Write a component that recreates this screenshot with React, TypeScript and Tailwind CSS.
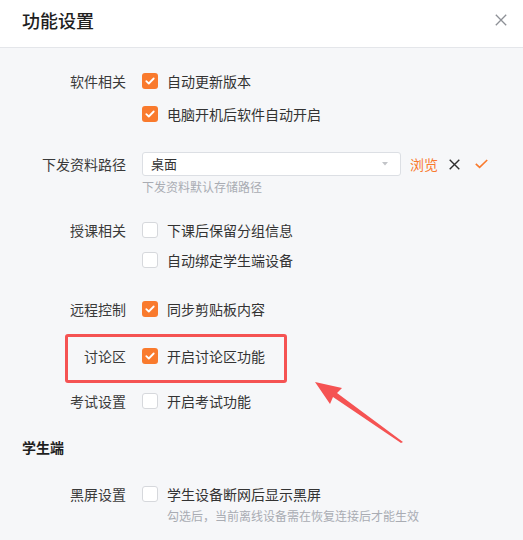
import React from "react";

const font = { fontFamily: '"Noto Sans CJK SC", "Noto Sans", sans-serif' };

function Box({ checked }: { checked: boolean }) {
  return checked ? (
    <span className="flex h-4 w-4 items-center justify-center rounded-[3px] bg-[#f97a2d]">
      <svg width="10" height="8" viewBox="0 0 10 8" fill="none">
        <path d="M1.3 4.1 L3.8 6.5 L8.7 1.5" stroke="white" strokeWidth="1.8" strokeLinecap="round" strokeLinejoin="round" />
      </svg>
    </span>
  ) : (
    <span className="h-4 w-4 rounded-[3px] border border-[#d6d8dc] bg-white" />
  );
}

function Row({ label, text, checked, className = "" }: { label?: string; text: string; checked: boolean; className?: string }) {
  return (
    <div className={"flex h-6 items-center " + className}>
      <div className="w-[126px] text-right text-[14px] text-[#3a3a3a]">{label}</div>
      <div className="ml-4 flex items-center">
        <Box checked={checked} />
        <span className="ml-[9px] text-[14px] text-[#333]">{text}</span>
      </div>
    </div>
  );
}

export default function App() {
  return (
    <div className="relative h-[540px] w-[523px] overflow-hidden bg-[#f6f7f9]" style={font}>
      <div className="flex h-12 items-start justify-between border-b border-[#e4e6ea] bg-white pl-[22px] pr-[16px]">
        <div className="mt-[7px] text-[18px] font-medium leading-[26px] text-[#1f1f1f]">功能设置</div>
        <svg className="mt-[14px]" width="12" height="12" viewBox="0 0 12 12">
          <path d="M0.8 0.8 L11.2 11.2 M11.2 0.8 L0.8 11.2" stroke="#8d9096" strokeWidth="1.3" />
        </svg>
      </div>

      <div className="flex flex-col">
        <Row label="软件相关" text="自动更新版本" checked className="mt-[21px]" />
        <Row text="电脑开机后软件自动开启" checked className="mt-[9px]" />

        <div className="mt-[26px] flex h-6 items-center">
          <div className="w-[126px] text-right text-[14px] text-[#3a3a3a]">下发资料路径</div>
          <div className="ml-4 flex h-6 w-[259px] items-center justify-between rounded-[3px] border border-[#dcdfe4] bg-white pl-2 pr-3">
            <span className="text-[13px] text-[#333]">桌面</span>
            <svg width="6" height="4" viewBox="0 0 6 4"><path d="M0 0 L6 0 L3 3.5 Z" fill="#c2c4c8" /></svg>
          </div>
          <span className="ml-[9px] text-[14px] text-[#f97a2d]">浏览</span>
          <svg className="ml-[11px]" width="11" height="11" viewBox="0 0 11 11">
            <path d="M0.7 0.7 L10.3 10.3 M10.3 0.7 L0.7 10.3" stroke="#2e2e2e" strokeWidth="1.4" />
          </svg>
          <svg className="ml-[15px]" width="13" height="10" viewBox="0 0 13 10" fill="none">
            <path d="M0.8 4.8 L4.6 8.4 L12.2 1" stroke="#f97a2d" strokeWidth="1.6" />
          </svg>
        </div>
        <div className="ml-[142px] mt-[3px] text-[12px] leading-4 text-[#a9acb3]">下发资料默认存储路径</div>

        <Row label="授课相关" text="下课后保留分组信息" checked={false} className="mt-[23px]" />
        <Row text="自动绑定学生端设备" checked={false} className="mt-[6px]" />

        <Row label="远程控制" text="同步剪贴板内容" checked className="mt-[25px]" />
        <Row label="讨论区" text="开启讨论区功能" checked className="mt-[23px]" />
        <Row label="考试设置" text="开启考试功能" checked={false} className="mt-[21px]" />

        <div className="ml-[22px] mt-[24px] text-[14px] font-bold leading-5 text-[#1f1f1f]">学生端</div>

        <Row label="黑屏设置" text="学生设备断网后显示黑屏" checked={false} className="mt-[25px]" />
        <div className="ml-[167px] mt-[2px] text-[12px] leading-4 text-[#a9acb3]">勾选后，当前离线设备需在恢复连接后才能生效</div>
      </div>

      <div className="absolute left-[65px] top-[334px] h-[49px] w-[222px] rounded-[3px] border-[3px] border-[#f55353]" />
      <svg className="absolute left-0 top-0" width="523" height="540" viewBox="0 0 523 540">
        <path d="M315 382 L342 388 L337 393 L403 442 L401 443 L333 397 L330 404 Z" fill="#f55353" />
      </svg>
    </div>
  );
}
